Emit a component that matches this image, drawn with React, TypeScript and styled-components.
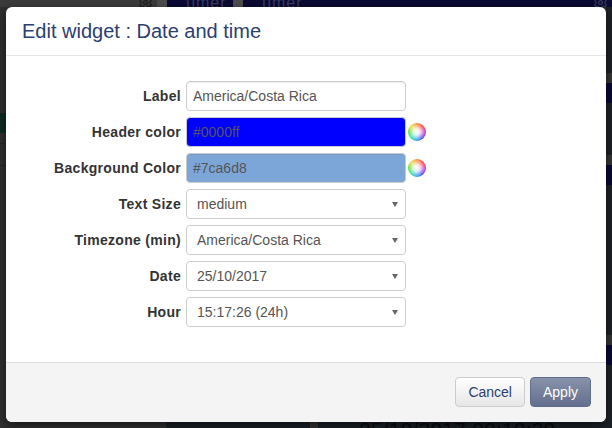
import * as React from 'react';
import styled, { createGlobalStyle } from 'styled-components';
import { Settings } from 'lucide-react';

const GlobalStyle = createGlobalStyle`
  html, body {
    margin: 0;
    padding: 0;
    height: 100%;
    overflow: hidden;
    background: #2e2e2e;
    font-family: 'Liberation Sans', Arial, sans-serif;
    font-size: 14px;
    color: #333333;
  }
`;

const Page = styled.div`
  position: relative;
  width: 612px;
  height: 428px;
  overflow: hidden;
`;

// dashboard showing through the modal backdrop
const Dashboard = styled.div`
  display: flex;
  flex-direction: column;
  width: 612px;
  height: 428px;
`;

const TopStrip = styled.div`
  display: grid;
  grid-template-columns: 157px 10px 66px 10px 369px;
  height: 7px;
  flex: none;
`;

const WidgetHead = styled.div<{ $bg: string }>`
  display: flex;
  align-items: flex-start;
  justify-content: flex-end;
  overflow: hidden;
  padding-right: 4px;
  background: ${(p) => p.$bg};
  color: #1c1c1c;
`;

const NavyHead = styled(WidgetHead)`
  color: #3a3a62;
`;

const HeadText = styled.span`
  margin-right: auto;
  padding-left: 19px;
  font-size: 16px;
  line-height: 6px;
  letter-spacing: 1px;
  white-space: nowrap;
`;

const GearIcon = styled(Settings)`
  flex: none;
  margin-top: -5px;
`;

const Middle = styled.div`
  flex: 1;
  display: flex;
  justify-content: space-between;
`;

const Side = styled.div<{ $bg: string }>`
  width: 6px;
  display: flex;
  flex-direction: column;
  background: ${(p) => p.$bg};
`;

const Band = styled.div<{ $h: number; $bg?: string }>`
  flex: none;
  height: ${(p) => p.$h}px;
  background: ${(p) => p.$bg ?? 'transparent'};
`;

const BottomStrip = styled.div`
  display: grid;
  grid-template-columns: 166px 144px 8px 294px;
  height: 6px;
  flex: none;
  overflow: hidden;
`;

const BottomCell = styled.div<{ $bg: string }>`
  background: ${(p) => p.$bg};
`;

const ClockCell = styled(BottomCell)`
  display: flex;
  align-items: flex-end;
  padding-left: 41px;
  font-size: 21px;
  line-height: 16px;
  letter-spacing: 0.2px;
  color: #0a0a0a;
  white-space: nowrap;
`;

const Modal = styled.form`
  position: absolute;
  left: 6px;
  top: 7px;
  width: 600px;
  height: 415px;
  display: flex;
  flex-direction: column;
  background: #ffffff;
  border-radius: 6px;
  overflow: hidden;
  box-shadow: 0 3px 9px rgba(0, 0, 0, 0.5);
`;

const Header = styled.div`
  height: 49px;
  box-sizing: border-box;
  padding: 13px 16px 0;
  border-bottom: 1px solid #e5e5e5;
`;

const Title = styled.h4`
  margin: 0;
  font-size: 20px;
  line-height: 23px;
  font-weight: 400;
  color: #2a4070;
`;

const Body = styled.div`
  flex: 1;
  display: flex;
  flex-direction: column;
  gap: 6px;
  padding: 25px 0 0;
`;

const Row = styled.div`
  display: grid;
  grid-template-columns: 175px 220px auto;
  column-gap: 5px;
  align-items: center;
  height: 30px;
`;

const Label = styled.label`
  text-align: right;
  font-weight: 700;
  font-size: 14px;
  letter-spacing: 0.3px;
  color: #333333;
  white-space: nowrap;
`;

const TextInput = styled.input<{ $bg?: string }>`
  width: 220px;
  height: 30px;
  box-sizing: border-box;
  padding: 6px;
  border: 1px solid #cccccc;
  border-radius: 4px;
  font: 14px 'Liberation Sans', Arial, sans-serif;
  color: #555555;
  background: ${(p) => p.$bg ?? '#ffffff'};
  box-shadow: inset 0 1px 1px rgba(0, 0, 0, 0.075);
  outline: none;
`;

const SelectBox = styled.div`
  position: relative;
  width: 220px;
  height: 30px;

  &::after {
    content: '';
    position: absolute;
    right: 8px;
    top: 13px;
    border-left: 3px solid transparent;
    border-right: 3px solid transparent;
    border-top: 5px solid #666666;
    pointer-events: none;
  }
`;

const Select = styled.select`
  appearance: none;
  display: block;
  width: 220px;
  height: 30px;
  box-sizing: border-box;
  padding: 6px 6px 6px 10px;
  border: 1px solid #cccccc;
  border-radius: 4px;
  font: 14px 'Liberation Sans', Arial, sans-serif;
  color: #555555;
  background-color: #ffffff;
  outline: none;
`;

const ColorWheel = styled.span`
  display: block;
  width: 18px;
  height: 18px;
  margin-left: -3px;
  border-radius: 50%;
  background:
    radial-gradient(circle, #ffffff 0%, rgba(255, 255, 255, 0.85) 25%, rgba(255, 255, 255, 0) 70%),
    conic-gradient(#ff8a3c, #ff3b3b, #d030d0, #5a3cf0, #30a0f0, #30e0a0, #60e040, #e8e040, #ff8a3c);
`;

const Footer = styled.div`
  height: 60px;
  box-sizing: border-box;
  display: flex;
  justify-content: flex-end;
  gap: 5px;
  padding: 14px 15px 0 0;
  background: #f4f4f4;
  border-top: 1px solid #dddddd;
`;

const Button = styled.button<{ $primary?: boolean }>`
  height: 30px;
  box-sizing: border-box;
  padding: 0 12px;
  border-radius: 4px;
  font: 14px 'Liberation Sans', Arial, sans-serif;
  border: 1px solid ${(p) => (p.$primary ? '#5f6d8c' : '#cccccc')};
  color: ${(p) => (p.$primary ? '#ffffff' : '#2a4070')};
  background: ${(p) =>
    p.$primary
      ? 'linear-gradient(#8892aa, #636f8e)'
      : 'linear-gradient(#ffffff, #e6e6e6)'};
`;

const selects = [
  { label: 'Text Size', value: 'medium' },
  { label: 'Timezone (min)', value: 'America/Costa Rica' },
  { label: 'Date', value: '25/10/2017' },
  { label: 'Hour', value: '15:17:26 (24h)' },
];

export default function App() {
  return (
    <Page>
      <GlobalStyle />
      <Dashboard>
        <TopStrip>
          <WidgetHead $bg="#3a3a3a">
            <GearIcon size={15} />
          </WidgetHead>
          <WidgetHead $bg="#4c4c4c" />
          <NavyHead $bg="#0a0a32">
            <HeadText>timer</HeadText>
          </NavyHead>
          <WidgetHead $bg="#4c4c4c" />
          <NavyHead $bg="#0a0a32">
            <HeadText>timer</HeadText>
            <GearIcon size={15} />
          </NavyHead>
        </TopStrip>
        <Middle>
          <Side $bg="#2e2e2e">
            <Band $h={106} />
            <Band $h={20} $bg="#0e2a20" />
            <Band $h={10} />
            <Band $h={1} $bg="#242424" />
            <Band $h={21} />
            <Band $h={1} $bg="#242424" />
          </Side>
          <Side $bg="#1d2126">
            <Band $h={66} />
            <Band $h={10} $bg="#333333" />
            <Band $h={20} $bg="#0a0a32" />
            <Band $h={52} />
            <Band $h={10} $bg="#333333" />
            <Band $h={20} $bg="#0a0a32" />
            <Band $h={150} />
            <Band $h={10} $bg="#333333" />
            <Band $h={20} $bg="#0a0a32" />
          </Side>
        </Middle>
        <BottomStrip>
          <BottomCell $bg="#2e2e2e" />
          <BottomCell $bg="#1a2026" />
          <BottomCell $bg="#333333" />
          <ClockCell $bg="#1a2026">25/10/2017 00:10:20</ClockCell>
        </BottomStrip>
      </Dashboard>
      <Modal onSubmit={(e) => e.preventDefault()}>
        <Header>
          <Title>Edit widget : Date and time</Title>
        </Header>
        <Body>
          <Row>
            <Label>Label</Label>
            <TextInput defaultValue="America/Costa Rica" />
          </Row>
          <Row>
            <Label>Header color</Label>
            <TextInput $bg="#0000ff" defaultValue="#0000ff" />
            <ColorWheel />
          </Row>
          <Row>
            <Label>Background Color</Label>
            <TextInput $bg="#7ca6d8" defaultValue="#7ca6d8" />
            <ColorWheel />
          </Row>
          {selects.map((s) => (
            <Row key={s.label}>
              <Label>{s.label}</Label>
              <SelectBox>
                <Select defaultValue={s.value}>
                  <option>{s.value}</option>
                </Select>
              </SelectBox>
            </Row>
          ))}
        </Body>
        <Footer>
          <Button type="button">Cancel</Button>
          <Button type="submit" $primary>
            Apply
          </Button>
        </Footer>
      </Modal>
    </Page>
  );
}
